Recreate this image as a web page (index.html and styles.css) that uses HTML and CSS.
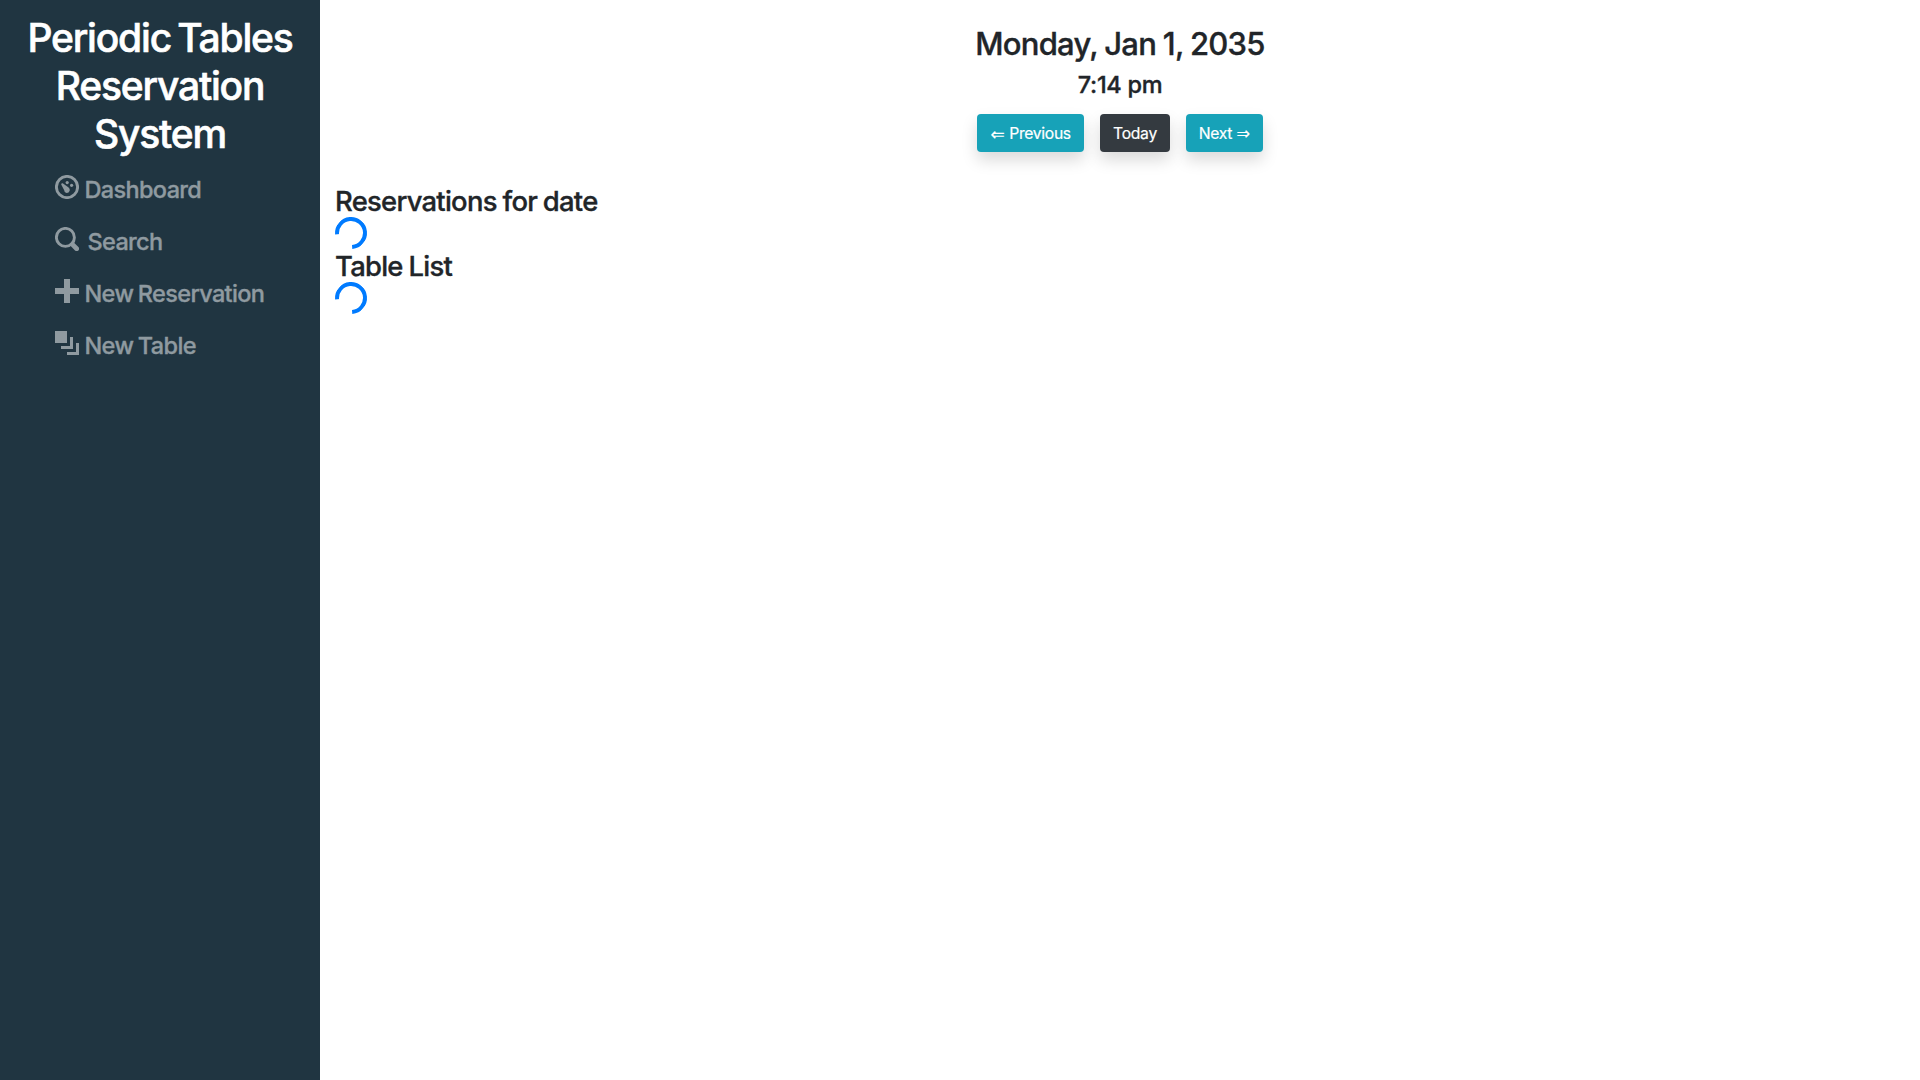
FILE: index.html
```html
<!DOCTYPE html>
<html lang="en">
<head>
<meta charset="utf-8">
<title>Periodic Tables</title>
<link rel="stylesheet" href="styles.css">
</head>
<body>
<div class="layout">
  <nav class="sidebar">
    <h1 class="brand">Periodic Tables<br>Reservation<br>System</h1>
    <ul class="menu">
      <li class="menu-item">
        <svg class="icon" viewBox="0 0 24 24" fill="currentColor"><circle cx="12" cy="12" r="10.6" fill="none" stroke="currentColor" stroke-width="2.9"/><circle cx="12.2" cy="7.6" r="1.6"/><circle cx="16.6" cy="10.3" r="1.6"/><path d="M6.2 9.6Q6.2 8.1 7.7 8.3L13.6 12.4Q15.2 13.8 14.7 15.7Q13.6 18.3 11 17.8Q9.4 17.3 9.2 15.3Z"/></svg>
        <span class="dashboard">Dashboard</span>
      </li>
      <li class="menu-item">
        <svg class="icon" viewBox="0 0 24 24" fill="none" stroke="currentColor"><circle cx="10.4" cy="10.4" r="9" stroke-width="2.9"/><path d="M17.4 17.4L21.7 21.7" stroke-width="4.8" stroke-linecap="round"/></svg>
        <span class="search">Search</span>
      </li>
      <li class="menu-item">
        <svg class="icon" viewBox="0 0 24 24" fill="currentColor"><path d="M9 0h6v9h9v6h-9v9H9v-9H0V9h9z"/></svg>
        <span class="reservation">New Reservation</span>
      </li>
      <li class="menu-item">
        <svg class="icon" viewBox="0 0 24 24" fill="currentColor"><path d="M0 0h12v12H0zM15 6h3v12H6v-3h9zM21 12h3v12H12v-3h9z"/></svg>
        <span class="table">New Table</span>
      </li>
    </ul>
  </nav>
  <main class="content">
    <header class="heading">
      <h2 class="date">Monday, Jan 1, 2035</h2>
      <h3 class="time">7:14 pm</h3>
      <div class="buttons">
        <button class="btn btn-prev"><span class="arrow">⇐</span><span>Previous</span></button>
        <button class="btn btn-today"><span>Today</span></button>
        <button class="btn btn-next"><span>Next</span><span class="arrow arrow-next">⇒</span></button>
      </div>
    </header>
    <section>
      <h4 class="subtitle">Reservations for date</h4>
      <div class="spinner"></div>
    </section>
    <section>
      <h4 class="subtitle">Table List</h4>
      <div class="spinner"></div>
    </section>
  </main>
</div>
</body>
</html>
```
FILE: styles.css
```css
* { box-sizing: border-box; }
body { margin: 0; background: #fff; color: #212529; font-family: Inter, "Liberation Sans", sans-serif; font-weight: 520; }
h1, h2, h3, h4, ul { margin: 0; padding: 0; font-weight: 520; -webkit-text-stroke: 0.35px currentColor; }
.layout { display: flex; height: 1080px; }
.sidebar { width: 320px; flex: none; background: #203541; padding-top: 14px; }
.brand { color: #fff; font-size: 39px; line-height: 48px; text-align: center; letter-spacing: -1.2px; word-spacing: -3px; -webkit-text-stroke-width: 0.6px; }
.menu { list-style: none; padding: 11px 0 0 55px; color: #8f9aa0; font-size: 23.5px; line-height: 28px; letter-spacing: -0.65px; word-spacing: -1px; }
.menu-item { display: flex; gap: 5.5px; height: 52px; padding-top: 6px; white-space: nowrap; }
.icon { width: 24px; height: 24px; flex: none; }
.menu-item span { padding-top: 1px; }
.menu-item .search { padding-left: 3px; }
.content { flex: 1; padding: 25px 15px 0; }
.heading { display: flex; flex-direction: column; align-items: center; height: 160px; }
.date { font-size: 31px; line-height: 38px; letter-spacing: -0.75px; word-spacing: -0.8px; }
.time { font-size: 23.5px; line-height: 29px; margin-top: 7px; letter-spacing: -0.3px; }
.buttons { display: flex; gap: 16px; margin-top: 15px; }
.btn { display: flex; align-items: center; justify-content: center; height: 38px; border: 0; border-radius: 4px; padding: 1px 0 0; color: #fff; background: #17a2b8; font: 430 15.7px/24px Inter, "Liberation Sans", sans-serif; letter-spacing: -0.3px; -webkit-text-stroke: 0.2px currentColor; box-shadow: 0 8px 16px rgba(0, 0, 0, .15); }
.btn-prev { width: 107px; gap: 4px; }
.btn-today { width: 70px; background: #343a40; }
.btn-next { width: 77px; gap: 4px; }
.arrow { width: 15px; font: 17px/24px "DejaVu Sans", sans-serif; letter-spacing: 0; }
.arrow-next { width: 14px; font-size: 16px; padding-top: 1px; }
.subtitle { font-size: 27.4px; line-height: 33px; letter-spacing: -0.73px; word-spacing: -0.8px; }
.spinner { width: 32px; height: 32px; margin-top: -1px; margin-bottom: 1px; border: 4px solid #007bff; border-bottom-color: transparent; border-radius: 50%; transform: rotate(40deg); }
```
